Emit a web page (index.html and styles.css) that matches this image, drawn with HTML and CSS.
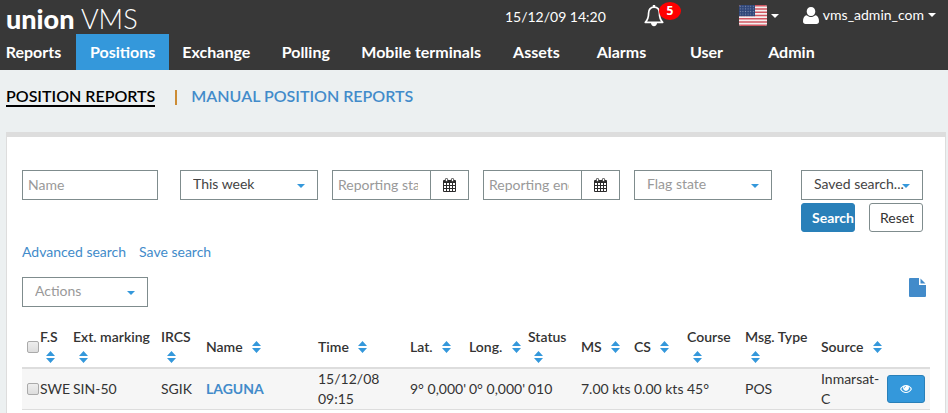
FILE: index.html
```html
<!DOCTYPE html>
<html lang="en">
<head>
<meta charset="utf-8">
<title>Union VMS</title>
<link rel="stylesheet" href="styles.css">
</head>
<body>
<svg class="defs" aria-hidden="true">
  <symbol id="calendar" viewBox="0 0 13 14">
    <path d="M1 2h11q1 0 1 1v10q0 1-1 1H1q-1 0-1-1V3q0-1 1-1z" fill="#2b2b2b"/>
    <path d="M1 5h2v2H1zM4 5h2v2H4zM7 5h2v2H7zM10 5h2v2h-2zM1 8h2v2H1zM4 8h2v2H4zM7 8h2v2H7zM10 8h2v2h-2zM1 11h2v2H1zM4 11h2v2H4zM7 11h2v2H7zM10 11h2v2h-2z" fill="#fff"/>
    <rect x="2.4" y=".4" width="2.2" height="3.2" rx="1" fill="#fff" stroke="#2b2b2b" stroke-width=".9"/>
    <rect x="8.4" y=".4" width="2.2" height="3.2" rx="1" fill="#fff" stroke="#2b2b2b" stroke-width=".9"/>
  </symbol>
  <symbol id="sort" viewBox="0 0 9 12">
    <path d="M4.500 0L9 5H0zM0 7h9l-4.500 5z" fill="#3498db"/>
  </symbol>
</svg>
<header class="header">
  <div class="topbar">
    <a class="logo" href="#"><b>union</b> VMS</a>
    <time class="clock">15/12/09 14:20</time>
    <button class="bell" type="button" aria-label="Notifications">
      <svg width="20" height="22" viewBox="0 0 20 22"><path d="M10 2.200C6.500 2.200 4.600 4.600 4.600 8c0 5-1.200 7.300-3.300 9.300h17.400C16.600 15.300 15.400 13 15.400 8c0-3.400-1.900-5.800-5.400-5.800z" fill="none" stroke="#fff" stroke-width="1.700" stroke-linejoin="round"/><path d="M8.800 0h2.400v2.500H8.800zM7 18h6c0 2-1.300 3.200-3 3.200S7 20 7 18z" fill="#fff"/></svg>
      <span class="badge">5</span>
    </button>
    <button class="language" type="button" aria-label="Language">
      <svg width="28" height="21" viewBox="0 0 28 21"><defs><clipPath id="flag"><rect width="28" height="21" rx="2"/></clipPath><pattern id="stars" width="2.600" height="2.600" patternUnits="userSpaceOnUse"><rect width="2.600" height="2.600" fill="#2f4678"/><circle cx="1.300" cy="1.300" r=".6" fill="#8190b0"/></pattern></defs><g clip-path="url(#flag)"><path fill="#f4f0f0" d="M0 0h28v21H0z"/><path d="M0 .8h28M0 4.040h28M0 7.270h28M0 10.500h28M0 13.700h28M0 16.960h28M0 20.200h28" stroke="#d05560" stroke-width="1.620"/><path fill="url(#stars)" d="M0 0h16v11.300H0z"/></g></svg>
      <span class="caret"></span>
    </button>
    <button class="account" type="button">
      <svg width="16" height="17" viewBox="0 0 16 17"><path d="M8 0c2.600 0 4.300 2 4.300 4.500S10.600 9 8 9 3.700 7 3.700 4.500 5.400 0 8 0zM3.800 8.200C5 9.400 6.500 10 8 10s3-.6 4.200-1.800C14.800 8.500 16 11 16 14.200c0 1.800-1 2.800-2.600 2.800H2.600C1 17 0 16 0 14.200 0 11 1.200 8.500 3.800 8.200z" fill="#fff"/></svg>
      <span>vms_admin_com</span>
      <span class="caret"></span>
    </button>
  </div>
  <nav class="nav">
    <a href="#">Reports</a>
    <a class="active" href="#">Positions</a>
    <a href="#">Exchange</a>
    <a href="#">Polling</a>
    <a href="#">Mobile terminals</a>
    <a href="#">Assets</a>
    <a href="#">Alarms</a>
    <a href="#">User</a>
    <a href="#">Admin</a>
  </nav>
</header>
<nav class="subnav">
  <a class="current" href="#">POSITION REPORTS</a>
  <span class="divider"></span>
  <a href="#">MANUAL POSITION REPORTS</a>
</nav>
<main class="panel">
  <form class="filters">
    <input class="field" type="text" placeholder="Name" aria-label="Name">
    <div class="select period"><select aria-label="Period"><option>This week</option></select></div>
    <div class="date">
      <input class="field" type="text" placeholder="Reporting start" aria-label="Reporting start">
      <button type="button" aria-label="Choose start date"><svg width="13" height="14"><use href="#calendar"/></svg></button>
    </div>
    <div class="date">
      <input class="field" type="text" placeholder="Reporting end" aria-label="Reporting end">
      <button type="button" aria-label="Choose end date"><svg width="13" height="14"><use href="#calendar"/></svg></button>
    </div>
    <div class="select muted"><select aria-label="Flag state"><option>Flag state</option></select></div>
    <div class="saved">
      <div class="select"><select aria-label="Saved searches"><option>Saved search...</option></select></div>
      <div class="buttons">
        <button class="btn primary" type="button">Search</button>
        <button class="btn" type="button">Reset</button>
      </div>
    </div>
  </form>
  <div class="links">
    <a href="#">Advanced search</a>
    <a href="#">Save search</a>
  </div>
  <div class="toolbar">
    <div class="select muted actions"><select aria-label="Actions"><option>Actions</option></select></div>
    <button class="export" type="button" aria-label="Export"><svg width="17" height="19" viewBox="0 0 17 19"><path d="M1 0h9v7h7v11q0 1-1 1H1q-1 0-1-1V1q0-1 1-1zM11.500 .5l5 5h-5z" fill="#428bca"/></svg></button>
  </div>
  <table class="table">
    <colgroup>
      <col class="c-check"><col class="c-flag"><col class="c-ext"><col class="c-ircs"><col class="c-name"><col class="c-time"><col class="c-pos"><col class="c-pos"><col class="c-num"><col class="c-num"><col class="c-num"><col class="c-course"><col class="c-type"><col class="c-source"><col class="c-view">
    </colgroup>
    <thead>
      <tr>
        <th><input type="checkbox" aria-label="Select all"></th>
        <th>F.S <svg class="sort"><use href="#sort"/></svg></th>
        <th>Ext. marking <svg class="sort"><use href="#sort"/></svg></th>
        <th>IRCS <svg class="sort"><use href="#sort"/></svg></th>
        <th>Name <svg class="sort"><use href="#sort"/></svg></th>
        <th>Time <svg class="sort"><use href="#sort"/></svg></th>
        <th>Lat. <svg class="sort"><use href="#sort"/></svg></th>
        <th>Long. <svg class="sort"><use href="#sort"/></svg></th>
        <th>Status <svg class="sort"><use href="#sort"/></svg></th>
        <th>MS <svg class="sort"><use href="#sort"/></svg></th>
        <th>CS <svg class="sort"><use href="#sort"/></svg></th>
        <th>Course <svg class="sort"><use href="#sort"/></svg></th>
        <th>Msg. Type <svg class="sort"><use href="#sort"/></svg></th>
        <th>Source <svg class="sort"><use href="#sort"/></svg></th>
        <th></th>
      </tr>
    </thead>
    <tbody>
      <tr>
        <td><input type="checkbox" aria-label="Select LAGUNA"></td>
        <td>SWE</td>
        <td>SIN-50</td>
        <td>SGIK</td>
        <td><a class="vessel" href="#">LAGUNA</a></td>
        <td class="wrap">15/12/08<br>09:15</td>
        <td>9° 0,000'</td>
        <td>0° 0,000'</td>
        <td>010</td>
        <td>7.00 kts</td>
        <td>0.00 kts</td>
        <td>45°</td>
        <td>POS</td>
        <td class="wrap">Inmarsat-C</td>
        <td><button class="view" type="button" aria-label="View"><svg width="12" height="8" viewBox="0 0 12 8"><path d="M0 4C1.500 1.400 3.600 0 6 0s4.500 1.400 6 4C10.500 6.600 8.400 8 6 8S1.500 6.600 0 4z" fill="#fff"/><path d="M1.200 4C2.300 5.900 4 7 6 7s3.700-1.100 4.800-3C10.300 3.100 9.600 2.300 8.800 1.800a3 3 0 1 1-5.600 0C2.400 2.300 1.700 3.100 1.200 4z" fill="#3498db"/><path d="M4.200 3.300A2 2 0 0 1 6 1.300" fill="none" stroke="#3498db" stroke-width=".6"/></svg></button></td>
      </tr>
    </tbody>
  </table>
</main>
</body>
</html>
```
FILE: styles.css
```css
* { box-sizing: border-box; }
body {
  margin: 0;
  background: #ecf0f1;
  color: #333;
  font: 14px/20px Lato, "Liberation Sans", sans-serif;
}
a { color: #428bca; text-decoration: none; }
button, input, select { font: inherit; color: inherit; margin: 0; }
button { padding: 0; border: 0; background: none; }
svg { display: block; }
.defs { position: absolute; width: 0; height: 0; }

.header { background: #383838; color: #fff; }
.header a { color: #fff; }
.topbar {
  display: flex;
  align-items: flex-start;
  height: 34px;
  padding: 5px 12px 0 6px;
}
.logo { font-size: 27px; line-height: 28px; font-weight: 300; }
.logo b { font-weight: 900; }
.clock { margin-left: auto; padding-top: 2px; }
.bell { position: relative; margin-left: 38px; }
.badge {
  position: absolute;
  top: -3px;
  left: 15px;
  width: 22px;
  height: 18px;
  border-radius: 50%;
  background: #f00;
  font: bold 12px/17px "Open Sans", sans-serif;
}
.language { display: flex; align-items: center; gap: 4px; margin-left: 75px; }
.account { display: flex; align-items: center; gap: 4px; margin-left: 24px; }
.caret {
  border: 4px solid transparent;
  border-top-color: #fff;
  border-bottom: 0;
}

.nav { display: flex; margin-left: -9px; }
.nav a {
  min-width: 85px;
  padding: 0 13px;
  text-align: center;
  font-size: 16px;
  line-height: 36px;
  font-weight: 700;
}
.nav .active { padding: 0 14px; background: #3498db; }

.subnav {
  display: flex;
  align-items: flex-start;
  padding: 17px 6px 25px;
  font-size: 16px;
  line-height: 18px;
  font-weight: 600;
}
.subnav .current { color: #000; border-bottom: 2px solid #000; }
.divider { width: 2px; height: 15px; margin: 3px 14px 0 20px; background: #cc8c35; }

.panel {
  margin: 0 2px 0 6px;
  padding: 33px 15px 16px;
  border: 1px solid #ddd;
  border-top-width: 5px;
  background: #fff;
}
.filters {
  display: grid;
  grid-template-columns: 136fr 146fr 137fr 137fr 138fr 137fr;
  gap: 14px;
  align-items: start;
  padding-right: 7px;
}
.period { margin-left: 8px; }
.saved { margin-left: 15px; }
.field {
  width: 100%;
  min-width: 0;
  height: 30px;
  padding: 0 5px 1px;
  border: 1px solid #7f8c8d;
  border-radius: 0;
  background: #fff;
}
.field::placeholder { color: #999; opacity: 1; }
.date { display: flex; }
.date .field { padding-right: 12px; }
.date button {
  display: grid;
  place-items: center;
  flex: 0 0 38px;
  height: 30px;
  border: 1px solid #7f8c8d;
  border-left: 0;
}
.select { position: relative; color: #444; }
.select select {
  display: block;
  width: 100%;
  height: 30px;
  padding: 0 0 2px 12px;
  border: 1px solid #7f8c8d;
  border-radius: 0;
  background: #fff;
  appearance: none;
}
.select.muted { color: #999; }
.select::after {
  content: "";
  position: absolute;
  right: 13px;
  top: 14px;
  border: 4px solid transparent;
  border-top-color: #3498db;
  border-bottom: 0;
  pointer-events: none;
}
.buttons { display: grid; grid-template-columns: 1fr 1fr; gap: 14px; margin-top: 3px; }
.btn {
  height: 29px;
  padding: 0 0 0 10px;
  border: 1px solid #7f8c8d;
  border-radius: 3px;
  background: #fff;
  text-align: left;
}
.btn.primary { border-color: #2980b9; background: #2980b9; color: #fff; font-weight: 700; }

.links { display: flex; gap: 13px; margin-top: 10px; }
.toolbar {
  display: flex;
  justify-content: space-between;
  align-items: flex-start;
  margin-top: 15px;
  padding-right: 4px;
}
.actions { width: 126px; }
.export { margin-top: 1px; }

.table {
  width: 100%;
  margin-top: 20px;
  table-layout: fixed;
  border-collapse: separate;
  border-spacing: 0;
}
.table th, .table td { padding: 0; text-align: left; vertical-align: middle; }
.table th { font-weight: 600; border-bottom: 2px solid #ddd; }
.table td { height: 41px; white-space: nowrap; background: #f6f6f6; border-bottom: 1px solid #ddd; }
.table td.wrap { white-space: normal; }
.table input {
  display: block;
  width: 12px;
  height: 12px;
  margin: 0 0 0 5px;
  appearance: none;
  border: 1px solid #aaa;
  border-radius: 2px;
  background: linear-gradient(#eee, #ddd);
}
.vessel { font-weight: 700; }
.sort { display: inline-block; width: 9px; height: 12px; margin-left: 6px; vertical-align: -1px; }
.view {
  display: grid;
  place-items: center;
  width: 38px;
  height: 28px;
  border: 1px solid #2980b9;
  border-radius: 3px;
  background: #3498db;
}
.c-check { width: 18px; }
.c-flag { width: 33px; }
.c-ext { width: 88px; }
.c-ircs { width: 45px; }
.c-name { width: 112px; }
.c-time { width: 92px; }
.c-pos { width: 59px; }
.c-num { width: 53px; }
.c-course { width: 58px; }
.c-type { width: 76px; }
.c-source { width: 66px; }
.c-view { width: 43px; }
```
